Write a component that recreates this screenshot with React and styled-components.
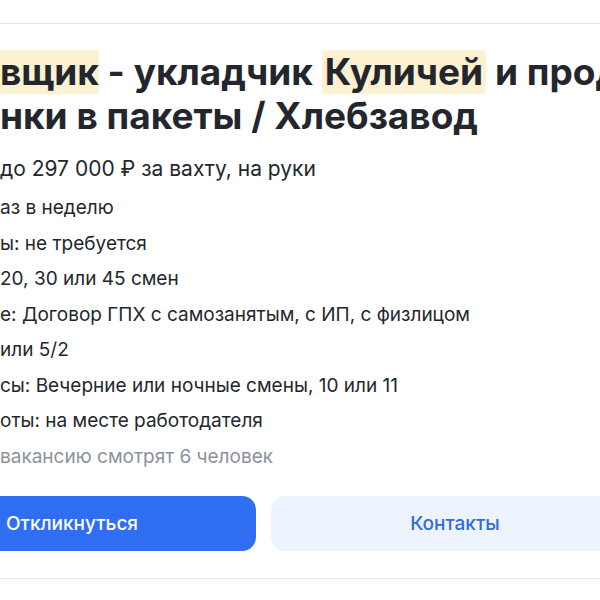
import styled, { createGlobalStyle } from 'styled-components';

const GlobalStyle = createGlobalStyle`
  html, body {
    margin: 0;
    padding: 0;
    background: #fff;
  }
  body {
    font-family: Inter, "Noto Sans", "Liberation Sans", sans-serif;
    color: #23272d;
  }
`;

// the card is wider than the window; its left gutter sits off screen
const GUTTER = 112;

const Viewport = styled.div`
  width: 600px;
  height: 600px;
  overflow: hidden;
  padding-top: 23px;
  box-sizing: border-box;
`;

const Card = styled.section`
  width: 751px;
  margin-left: -${GUTTER}px;
  padding: 26px 0 27px;
  border-top: 1px solid #e4e5e7;
  border-bottom: 1px solid #e4e5e7;
  display: flex;
  flex-direction: column;
`;

const Title = styled.h1`
  margin: 0;
  font-size: 37px;
  line-height: 44px;
  font-weight: 700;
  color: #23272d;
  display: flex;
  flex-direction: column;
`;

const Line = styled.div`
  display: flex;
  white-space: pre;
`;

const Cut = styled.span`
  display: inline-flex;
  justify-content: flex-end;
  flex: none;
  width: ${GUTTER}px;
  white-space: pre;
`;

const Mark = styled.mark`
  background: #fcf1d0;
  color: inherit;
  padding: 0 ${(p) => (p.$pad ? 3 : 0)}px;
`;

const Salary = styled.div`
  display: flex;
  margin-top: 17px;
  font-size: 21px;
  line-height: 28px;
  white-space: pre;
`;

const Facts = styled.ul`
  list-style: none;
  margin: 13px 0 0;
  padding: 0;
  display: flex;
  flex-direction: column;
  gap: 11.5px;
`;

const Fact = styled.li`
  display: flex;
  font-size: 19px;
  line-height: 24px;
  white-space: pre;
  color: ${(p) => (p.$muted ? '#8a929c' : '#23272d')};
`;

const Actions = styled.div`
  display: grid;
  grid-template-columns: 1fr 1fr;
  gap: 15px;
  margin-top: 27px;
`;

const Button = styled.button`
  height: 55px;
  border: none;
  border-radius: 14px;
  font-family: inherit;
  font-size: 19px;
  font-weight: 500;
  cursor: pointer;
  background: ${(p) => (p.$primary ? '#2f6ef3' : '#edf4ff')};
  color: ${(p) => (p.$primary ? '#fff' : '#2e6be6')};
`;

const facts = [
  ['Выплаты: 1 р', 'аз в неделю'],
  ['Опыт работ', 'ы: не требуется'],
  ['Вахта: 15, ', '20, 30 или 45 смен'],
  ['Оформлени', 'е: Договор ГПХ с самозанятым, с ИП, с физлицом'],
  ['График: 6/1 ', 'или 5/2'],
  ['Рабочие ча', 'сы: Вечерние или ночные смены, 10 или 11'],
  ['Формат раб', 'оты: на месте работодателя'],
];

export default function App() {
  return (
    <>
      <GlobalStyle />
      <Viewport>
        <Card>
          <Title>
            <Line>
              <Cut><Mark>Упако</Mark></Cut>
              <Mark>вщик</Mark> - укладчик <Mark $pad>Куличей</Mark> и продукции
            </Line>
            <Line>
              <Cut>и буха</Cut>
              нки в пакеты / Хлебзавод
            </Line>
          </Title>
          <Salary>
            <Cut>от 150 000 </Cut>
            до 297 000 ₽ за вахту, на руки
          </Salary>
          <Facts>
            {facts.map(([head, rest]) => (
              <Fact key={rest}>
                <Cut>{head}</Cut>
                {rest}
              </Fact>
            ))}
            <Fact $muted>
              <Cut>Сейчас эту </Cut>
              вакансию смотрят 6 человек
            </Fact>
          </Facts>
          <Actions>
            <Button $primary>Откликнуться</Button>
            <Button>Контакты</Button>
          </Actions>
        </Card>
      </Viewport>
    </>
  );
}
